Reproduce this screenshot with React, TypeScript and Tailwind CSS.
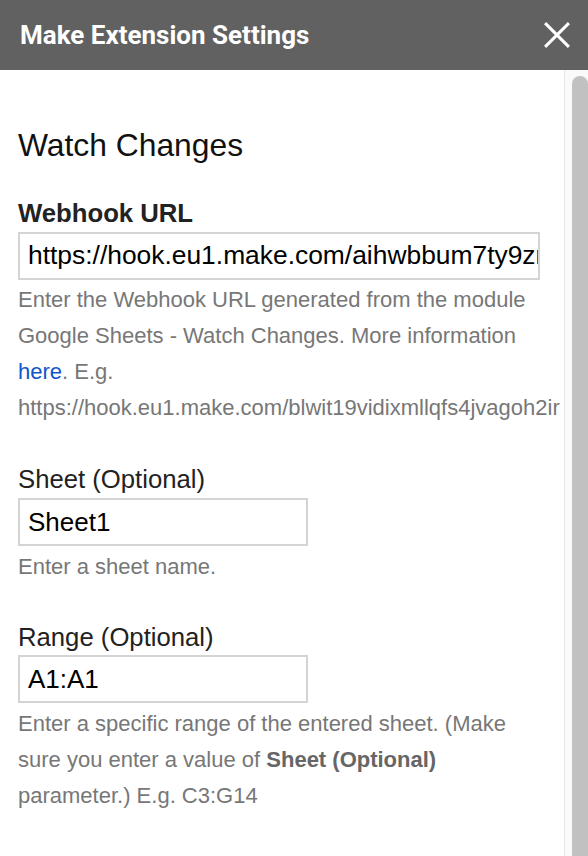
import React from 'react';

const arial = { fontFamily: '"Liberation Sans", Arial, sans-serif' };

const App: React.FC = () => {
    return (
        <div className="w-[588px] h-[856px] overflow-hidden bg-white flex flex-col" style={arial}>
            <header className="h-[70px] shrink-0 bg-[#616161] flex items-center justify-between pl-[20px] pr-[18px]">
                <h1 className="text-white text-[26px] font-bold" style={{ fontFamily: 'Roboto, sans-serif' }}>
                    Make Extension Settings
                </h1>
                <svg className="w-[26px] h-[26px]" viewBox="0 0 24 24" fill="none" stroke="white" strokeWidth="2.8" strokeLinecap="square">
                    <path d="M2 2l20 20M22 2L2 22" />
                </svg>
            </header>

            <div className="flex flex-1 min-h-0">
                <main className="flex-1 overflow-hidden pt-[56px] pl-[18px] pr-[24px]">
                    <h2 className="text-[31.8px] leading-[38px] text-[#111]">Watch Changes</h2>

                    <label className="block mt-[34px] text-[25.7px] leading-[30px] font-bold text-[#222]">Webhook URL</label>
                    <div className="mt-[4px] h-[48px] border-2 border-[#d4d4d4] px-[8px] flex items-center overflow-hidden whitespace-nowrap text-[26.4px] text-black">
                        https://hook.eu1.make.com/aihwbbum7ty9zmgfnq4ak2xs
                    </div>
                    <p className="mt-[2px] text-[22px] leading-[36px] text-[#777]">
                        Enter the Webhook URL generated from the module Google Sheets - Watch Changes. More information{' '}
                        <a className="text-[#1155cc]">here</a>. E.g. https://hook.eu1.make.com/blwit19vidixmllqfs4jvagoh2ir
                    </p>

                    <label className="block mt-[38px] text-[25.7px] leading-[30px] text-[#222]">Sheet (Optional)</label>
                    <div className="mt-[4px] w-[290px] h-[48px] border-2 border-[#d4d4d4] px-[8px] flex items-center text-[26px] text-black">
                        Sheet1
                    </div>
                    <p className="mt-[3px] text-[22px] leading-[36px] text-[#777]">Enter a sheet name.</p>

                    <label className="block mt-[37px] text-[25.7px] leading-[30px] text-[#222]">Range (Optional)</label>
                    <div className="mt-[3px] w-[290px] h-[48px] border-2 border-[#d4d4d4] px-[8px] flex items-center text-[26px] text-black">
                        A1:A1
                    </div>
                    <p className="mt-[3px] text-[22px] leading-[36px] text-[#777]">
                        Enter a specific range of the entered sheet. (Make sure you enter a value of{' '}
                        <b className="text-[#666]">Sheet (Optional)</b> parameter.) E.g. C3:G14
                    </p>
                </main>

                <div className="w-[24px] shrink-0 bg-[#fafafa] border-l border-[#e6e6e6] pt-[6px] pl-[7px]">
                    <div className="h-full rounded-t-full bg-[#c1c1c1]" />
                </div>
            </div>
        </div>
    );
};

export default App;
